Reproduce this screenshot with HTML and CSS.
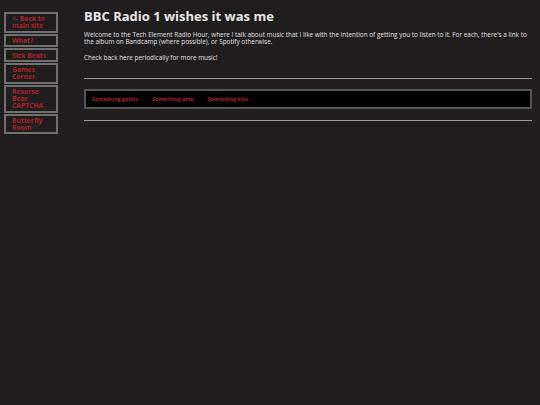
FILE: index.html
```html
<!DOCTYPE html>
<html lang="en">
<head>
<meta charset="utf-8">
<title>BBC Radio 1 wishes it was me</title>
<link rel="stylesheet" href="styles.css">
</head>
<body>
<div class="page">
  <nav class="sidebar">
    <a class="side-link" href="#">&lt;- Back to main site</a>
    <a class="side-link" href="#">What?</a>
    <a class="side-link" href="#">Sick Beats</a>
    <a class="side-link" href="#">Games Corner</a>
    <a class="side-link" href="#">Reverse Bear CAPTCHA</a>
    <a class="side-link" href="#">Butterfly Room</a>
  </nav>
  <main class="content">
    <h1 class="title">BBC Radio 1 wishes it was me</h1>
    <p class="text">Welcome to the Tech Element Radio Hour, where I talk about music that I like with the intention of getting you to listen to it. For each, there's a link to the album on Bandcamp (where possible), or Spotify otherwise.</p>
    <p class="text">Check back here periodically for more music!</p>
    <hr class="rule rule-top">
    <div class="tabs">
      <a class="tab" href="#">Something gothic</a>
      <a class="tab" href="#">Something emo</a>
      <a class="tab" href="#">Something else</a>
    </div>
    <hr class="rule rule-bottom">
  </main>
</div>
</body>
</html>
```
FILE: styles.css
```css
html, body {
  margin: 0;
  padding: 0;
  background: #1f1d1e;
}
body {
  font-family: "Open Sans", "Noto Sans", sans-serif;
  font-size: 6.75px;
  color: #e6e6e6;
}
.page {
  display: flex;
  align-items: flex-start;
  min-height: 405px;
}
.sidebar {
  display: flex;
  flex-direction: column;
  gap: 1px;
  width: 54px;
  margin: 12px 0 0 4px;
  flex: none;
}
.side-link {
  display: block;
  box-sizing: border-box;
  width: 54px;
  border: 2px solid #6f6f6f;
  padding: 1.2px 4px 1.2px 6px;
  line-height: 7.2px;
  color: #ad2129;
  font-weight: 700;
  text-decoration: none;
}
.content {
  flex: 1;
  margin: 0 8px 0 26px;
  min-width: 0;
}
.title {
  margin: 7px 0 0 0;
  font-size: 13px;
  line-height: 18px;
  font-weight: 700;
  color: #e8e8e8;
}
.text {
  margin: 6px 0 0 0;
  font-size: 6.4px;
  line-height: 7.3px;
  color: #e2e2e2;
}
.text + .text {
  margin-top: 8.5px;
}
.rule {
  border: none;
  height: 1px;
  background: #9a9a9a;
  margin: 0;
}
.rule-top {
  margin-top: 16.5px;
}
.tabs {
  display: flex;
  gap: 14px;
  align-items: center;
  margin-top: 10.5px;
  height: 20px;
  box-sizing: border-box;
  background: #000;
  border: 2px solid #555;
  padding: 0 6px;
}
.tab {
  color: #ad2129;
  font-weight: 700;
  font-size: 5.3px;
  text-decoration: none;
  line-height: 7px;
}
.rule-bottom {
  margin-top: 10.5px;
}
```
